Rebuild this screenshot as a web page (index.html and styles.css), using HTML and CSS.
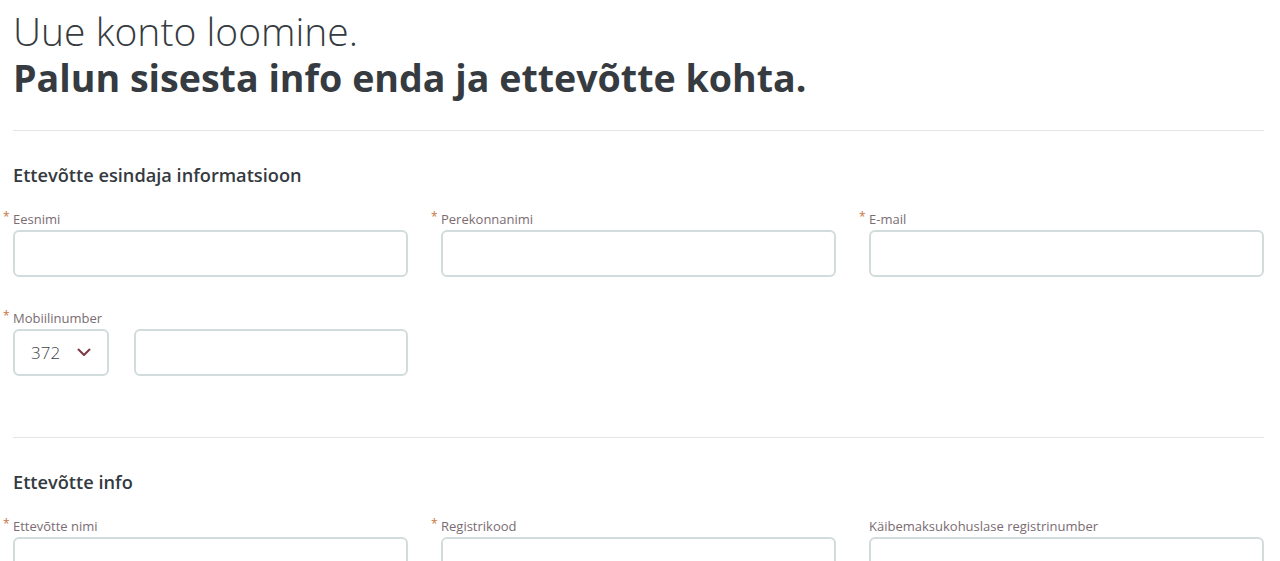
FILE: index.html
```html
<!DOCTYPE html>
<html lang="et">
<head>
<meta charset="utf-8">
<title>Uue konto loomine</title>
<link rel="stylesheet" href="styles.css">
</head>
<body>
<main class="page">
  <h1 class="title"><span class="title-light">Uue konto loomine.</span><span class="title-bold">Palun sisesta info enda ja ettevõtte kohta.</span></h1>
  <hr class="divider">
  <section class="section">
    <h2 class="section-title">Ettevõtte esindaja informatsioon</h2>
    <div class="grid">
      <div class="field">
        <label class="label required">Eesnimi</label>
        <input class="input" type="text">
      </div>
      <div class="field">
        <label class="label required">Perekonnanimi</label>
        <input class="input" type="text">
      </div>
      <div class="field">
        <label class="label required">E-mail</label>
        <input class="input" type="text">
      </div>
      <div class="field">
        <label class="label required">Mobiilinumber</label>
        <div class="phone">
          <div class="select"><span>372</span>
            <svg class="chev" width="14" height="9" viewBox="0 0 14 9"><path d="M1.5 1.5 L7 7 L12.5 1.5" fill="none" stroke="#7b3b42" stroke-width="2" stroke-linecap="round" stroke-linejoin="round"/></svg>
          </div>
          <input class="input phone-input" type="text">
        </div>
      </div>
    </div>
  </section>
  <hr class="divider divider-2">
  <section class="section">
    <h2 class="section-title">Ettevõtte info</h2>
    <div class="grid">
      <div class="field">
        <label class="label required">Ettevõtte nimi</label>
        <input class="input" type="text">
      </div>
      <div class="field">
        <label class="label required">Registrikood</label>
        <input class="input" type="text">
      </div>
      <div class="field">
        <label class="label">Käibemaksukohuslase registrinumber</label>
        <input class="input" type="text">
      </div>
    </div>
  </section>
</main>
</body>
</html>
```
FILE: styles.css
```css
* { box-sizing: border-box; }
html, body { margin: 0; padding: 0; background: #fff; }
body {
  font-family: "Open Sans", "Noto Sans", sans-serif;
  color: #353b40;
  overflow: hidden;
}
.page {
  width: 1251px;
  margin-left: 13px;
  padding-top: 7px;
}
.title {
  margin: 0;
  line-height: 47px;
  font-weight: 400;
}
.title-light { display: block; font-weight: 300; font-size: 39px; }
.title-bold { display: block; font-weight: 700; font-size: 37.6px; }
.divider {
  margin: 29px 0 0;
  border: 0;
  border-top: 1px solid #e3e5e6;
  height: 0;
}
.divider-2 { margin-top: 61px; }
.section-title {
  margin: 32px 0 0;
  font-size: 18.2px;
  line-height: 24px;
  font-weight: 600;
  color: #343a3f;
}
.grid {
  display: grid;
  grid-template-columns: repeat(3, 1fr);
  column-gap: 33px;
  row-gap: 32px;
  margin-top: 23px;
}
.field { display: flex; flex-direction: column; }
.label {
  position: relative;
  font-size: 13px;
  line-height: 18px;
  color: #7a6c72;
  margin-bottom: 2px;
}
.required::before {
  content: "*";
  position: absolute;
  left: -10px;
  top: -2px;
  color: #c5763f;
  font-size: 12px;
}
.input {
  height: 47px;
  border: 2px solid #d3dcdc;
  border-radius: 6px;
  background: #fff;
  font: inherit;
  width: 100%;
}
.phone { display: flex; gap: 25px; }
.select {
  width: 96px;
  height: 47px;
  flex: none;
  border: 2px solid #d3dcdc;
  border-radius: 6px;
  display: flex;
  align-items: center;
  padding-left: 16px;
  gap: 17px;
  font-size: 17px;
  font-weight: 300;
  color: #3d4449;
}
.phone-input { flex: 1; }
```
